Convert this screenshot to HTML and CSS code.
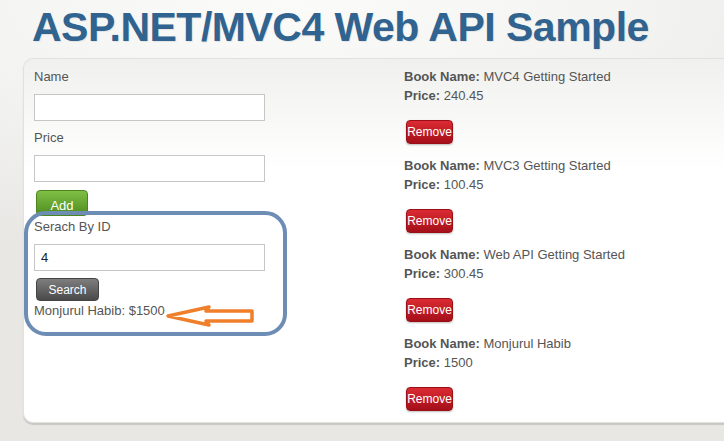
FILE: index.html
```
<!DOCTYPE html>
<html lang="en">
<head>
    <meta charset="UTF-8">
    <title>ASP.NET/MVC4 Web API Sample</title>
    <link rel="stylesheet" href="styles.css">
</head>
<body>
    <h1 class="title">ASP.NET/MVC4 Web API Sample</h1>

    <div class="panel">
        <!-- Add / search form -->
        <div class="form-col">
            <div class="label">Name</div>
            <input type="text" class="field">
            <div class="label">Price</div>
            <input type="text" class="field">
            <button class="btn btn-add">Add</button>

            <div class="search-box">
                <div class="label label-first">Serach By ID</div>
                <input type="text" class="field" value="4">
                <button class="btn btn-search">Search</button>
                <div class="result">Monjurul Habib: $1500</div>
                <svg class="arrow" width="92" height="24" viewBox="0 0 92 24">
                    <path d="M3 12 L44 3 L41 7 L87 7 L87 17 L41 17 L44 21 Z" fill="#fff" stroke="#f07f2c" stroke-width="3.5" stroke-linejoin="round"/>
                </svg>
            </div>
        </div>

        <!-- Book list -->
        <div class="book-col">
            <div class="book">
                <div><b>Book Name:</b> MVC4 Getting Started</div>
                <div><b>Price:</b> 240.45</div>
                <button class="btn btn-remove">Remove</button>
            </div>
            <div class="book">
                <div><b>Book Name:</b> MVC3 Getting Started</div>
                <div><b>Price:</b> 100.45</div>
                <button class="btn btn-remove">Remove</button>
            </div>
            <div class="book">
                <div><b>Book Name:</b> Web API Getting Started</div>
                <div><b>Price:</b> 300.45</div>
                <button class="btn btn-remove">Remove</button>
            </div>
            <div class="book">
                <div><b>Book Name:</b> Monjurul Habib</div>
                <div><b>Price:</b> 1500</div>
                <button class="btn btn-remove">Remove</button>
            </div>
        </div>
    </div>
</body>
</html>
```

FILE: styles.css
```
body {
    margin: 0;
    height: 441px;
    overflow: hidden;
    font-family: "Liberation Sans", Arial, sans-serif;
    font-size: 13px;
    color: #555;
    background: radial-gradient(ellipse 700px 260px at 40% 0, #fbfbfa 0%, #f3f3f1 50%, #e8e7e4 100%);
    background-color: #e8e7e4;
}
.title {
    margin: 0;
    padding: 4px 0 0 32px;
    height: 54px;
    font-size: 41px;
    font-weight: bold;
    line-height: 46px;
    letter-spacing: -0.5px;
    color: #30638f;
    text-shadow: 1px 1px 1px rgba(0, 0, 0, 0.08);
}
.panel {
    display: flex;
    margin-left: 23px;
    width: 701px;
    height: 365px;
    padding: 8px 0 0 10px;
    box-sizing: border-box;
    background: linear-gradient(#f0f0ee, #ffffff 110px);
    border: 1px solid #e2e1de;
    border-right: none;
    border-radius: 10px 0 0 10px;
    box-shadow: 0 2px 1px #c8c7c4;
}
.form-col {
    width: 370px;
}
.label {
    line-height: 20px;
    margin-top: 7px;
}
.form-col > .label:first-child {
    margin-top: 0;
}
.field {
    display: block;
    width: 231px;
    height: 27px;
    margin-top: 7px;
    padding: 0 6px;
    box-sizing: border-box;
    border: 1px solid #c6c6c6;
    background: #fff;
    font-family: "Liberation Sans", Arial, sans-serif;
    font-size: 13px;
    color: #222;
}
.btn {
    display: block;
    border: none;
    border-radius: 4px;
    color: #fff;
    font-family: "Liberation Sans", Arial, sans-serif;
    padding: 0;
    cursor: pointer;
}
.btn-add {
    margin: 8px 0 0 2px;
    width: 52px;
    height: 26px;
    padding-top: 4px;
    font-size: 13px;
    background: linear-gradient(#7fbf45, #4f8d1f);
    border: 1px solid #4c8420;
}
.search-box {
    position: relative;
}
.search-box::before {
    content: "";
    position: absolute;
    left: -10px;
    top: -6px;
    width: 255px;
    height: 117px;
    border: 4px solid #6e8db5;
    border-radius: 22px;
}
.label-first {
    margin-top: 1px;
}
.btn-search {
    margin: 7px 0 0 2px;
    width: 63px;
    height: 23px;
    font-size: 12px;
    background: linear-gradient(#7e7e7e, #4a4a4a);
    border: 1px solid #444;
}
.result {
    line-height: 20px;
    margin-top: 0;
}
.arrow {
    position: absolute;
    left: 131px;
    top: 87px;
}
.book-col {
    flex: 1;
}
.book {
    line-height: 19px;
    margin-bottom: 12px;
}
.book b {
    color: #555;
}
.btn-remove {
    margin: 15px 0 0 2px;
    width: 47px;
    height: 24px;
    font-size: 12px;
    background: linear-gradient(#db2b33, #a50f19);
    border: 1px solid #9a0e16;
    box-shadow: 0 1px 2px rgba(0, 0, 0, 0.25);
}
```
